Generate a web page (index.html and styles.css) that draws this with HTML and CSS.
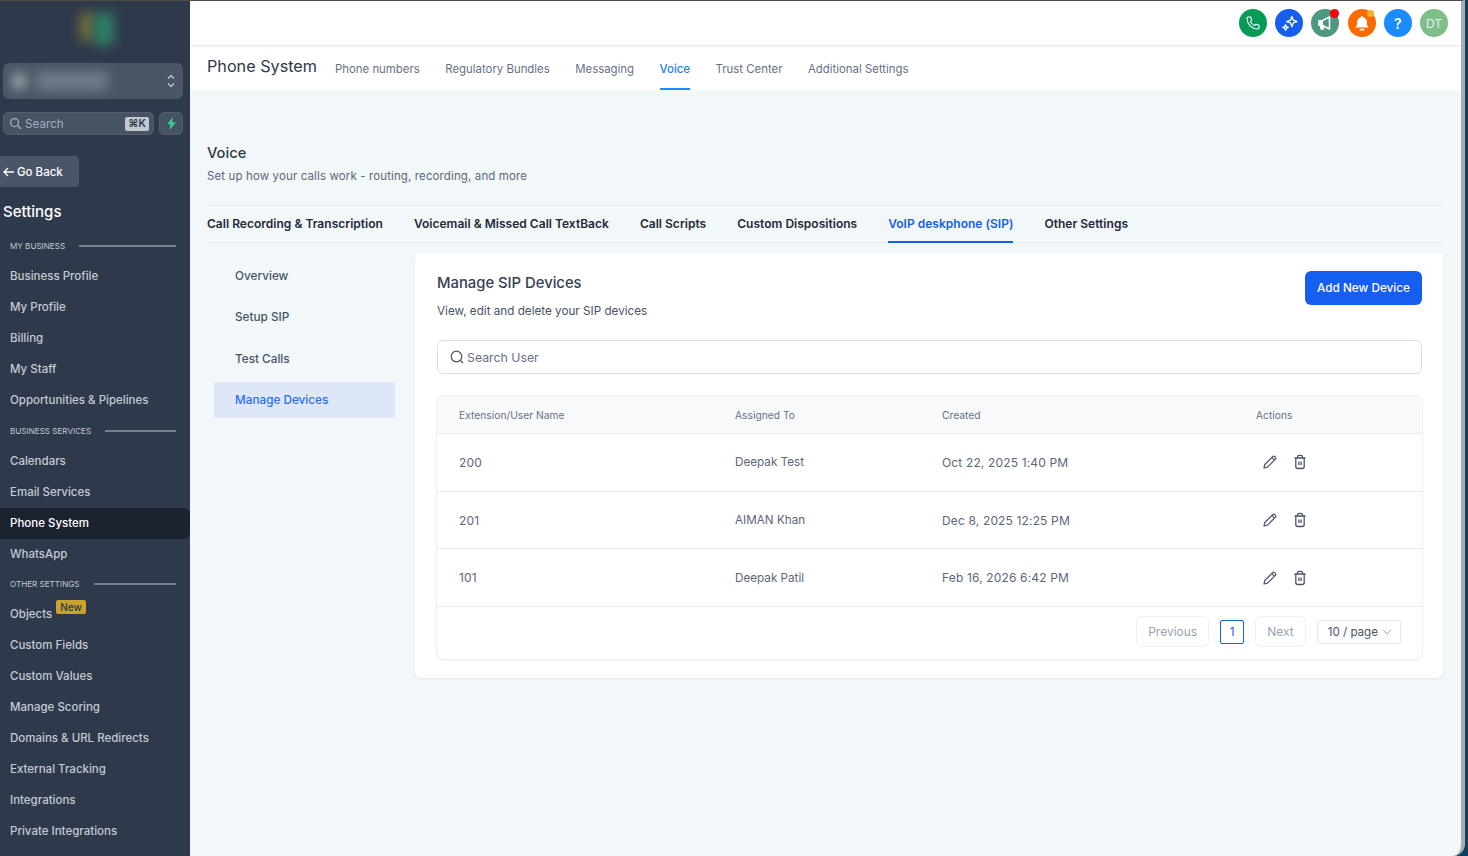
FILE: index.html
```html
<!DOCTYPE html>
<html lang="en">
<head>
<meta charset="utf-8">
<title>Phone System</title>
<link rel="stylesheet" href="styles.css">
</head>
<body>
<div class="app">
  <aside class="sidebar">
    <div class="logo-blur"><span class="lb-a"></span><span class="lb-b"></span></div>
    <div class="account">
      <div class="account-blur"><span class="ab-dot"></span><span class="ab-name"></span></div>
      <svg class="updown" width="10" height="18" viewBox="0 0 10 18" fill="none" stroke="#cbd5e0" stroke-width="1.1"><path d="M2 6.500 5 3.500l3 3M2 11.500l3 3 3-3"/></svg>
    </div>
    <div class="search-row">
      <div class="side-search">
        <svg width="13" height="13" viewBox="0 0 14 14" fill="none" stroke="#a0aec0" stroke-width="1.400"><circle cx="6" cy="6" r="4.300"/><path d="M9.200 9.200 13 13"/></svg>
        <span class="side-search-text">Search</span>
        <span class="kbd">⌘K</span>
      </div>
      <div class="bolt"><svg width="11" height="13" viewBox="0 0 11 13"><path d="M6.800 0 1 7.200h3.300L3.700 13 10 5.600H6.300z" fill="#37ca93"/></svg></div>
    </div>
    <div class="go-back"><svg width="12" height="10" viewBox="0 0 12 10" fill="none" stroke="#fff" stroke-width="1.300"><path d="M11 5H1.500M5 1 1 5l4 4"/></svg><span>Go Back</span></div>
    <div class="side-title">Settings</div>
    <div class="side-group"><span>MY BUSINESS</span><i></i></div>
    <a class="side-item">Business Profile</a>
    <a class="side-item">My Profile</a>
    <a class="side-item">Billing</a>
    <a class="side-item">My Staff</a>
    <a class="side-item">Opportunities &amp; Pipelines</a>
    <div class="side-group"><span>BUSINESS SERVICES</span><i></i></div>
    <a class="side-item">Calendars</a>
    <a class="side-item">Email Services</a>
    <a class="side-item active">Phone System</a>
    <a class="side-item">WhatsApp</a>
    <div class="side-group"><span>OTHER SETTINGS</span><i></i></div>
    <a class="side-item objects">Objects<b class="new">New</b></a>
    <a class="side-item">Custom Fields</a>
    <a class="side-item">Custom Values</a>
    <a class="side-item">Manage Scoring</a>
    <a class="side-item">Domains &amp; URL Redirects</a>
    <a class="side-item">External Tracking</a>
    <a class="side-item">Integrations</a>
    <a class="side-item">Private Integrations</a>
  </aside>
  <main class="main">
    <header class="topbar">
      <span class="circle c-green"><svg width="16" height="16" viewBox="0 0 24 24" fill="none" stroke="#fff" stroke-width="1.600" stroke-linecap="round" stroke-linejoin="round"><path d="M5 3h3.500l1.800 4.700-2.200 1.800a12 12 0 0 0 6.400 6.400l1.800-2.200L21 15.500V19a2 2 0 0 1-2.200 2A16.500 16.500 0 0 1 3 5.200 2 2 0 0 1 5 3z"/></svg></span>
      <span class="circle c-blue"><svg width="19" height="19" viewBox="0 0 24 24" fill="none" stroke="#fff" stroke-width="1.700" stroke-linejoin="round"><path d="M15 3l1.700 4.800 4.800 1.700-4.800 1.700L15 16l-1.700-4.800-4.800-1.700 4.800-1.700zM7 13.500l1 2.500 2.500 1-2.500 1-1 2.500-1-2.500-2.500-1 2.500-1z"/></svg></span>
      <span class="circle c-teal"><svg width="18" height="18" viewBox="0 0 24 24" fill="none" stroke="#fff" stroke-width="2" stroke-linejoin="round"><path d="M4 9h4v6H4z" fill="#fff"/><path d="M8 9l10-5v16L8 15z"/><path d="M6 15l1 5h3l-1-5" fill="#fff"/></svg><i class="dot dot-red"></i></span>
      <span class="circle c-orange"><svg width="18" height="18" viewBox="0 0 24 24" fill="#fff"><path d="M12 2.500a2 2 0 0 1 2 2A6.500 6.500 0 0 1 18.500 11c0 4 1 5.500 2.500 7H3c1.500-1.500 2.500-3 2.500-7A6.500 6.500 0 0 1 10 4.500a2 2 0 0 1 2-2z"/><rect x="8.500" y="19.500" width="7" height="2.500" rx="1.200"/></svg><i class="dot dot-amber"></i></span>
      <span class="circle c-sky">?</span>
      <span class="circle c-avatar">DT</span>
    </header>
    <nav class="subnav">
      <h1 class="subnav-title">Phone System</h1>
      <a class="subnav-link">Phone numbers</a>
      <a class="subnav-link">Regulatory Bundles</a>
      <a class="subnav-link">Messaging</a>
      <a class="subnav-link current">Voice</a>
      <a class="subnav-link">Trust Center</a>
      <a class="subnav-link">Additional Settings</a>
    </nav>
    <section class="content">
      <h2 class="voice-title">Voice</h2>
      <p class="voice-sub">Set up how your calls work - routing, recording, and more</p>
      <div class="tabs">
        <a class="tab">Call Recording &amp; Transcription</a>
        <a class="tab">Voicemail &amp; Missed Call TextBack</a>
        <a class="tab">Call Scripts</a>
        <a class="tab">Custom Dispositions</a>
        <a class="tab current">VoIP deskphone (SIP)</a>
        <a class="tab">Other Settings</a>
      </div>
      <div class="panel-row">
        <div class="leftmenu">
          <a class="lm-item">Overview</a>
          <a class="lm-item">Setup SIP</a>
          <a class="lm-item">Test Calls</a>
          <a class="lm-item selected">Manage Devices</a>
        </div>
        <div class="card">
          <div class="card-head">
            <div>
              <h3 class="card-title">Manage SIP Devices</h3>
              <p class="card-sub">View, edit and delete your SIP devices</p>
            </div>
            <button class="primary">Add New Device</button>
          </div>
          <div class="user-search">
            <svg width="14" height="14" viewBox="0 0 14 14" fill="none" stroke="#4a5568" stroke-width="1.200"><circle cx="6.500" cy="6.500" r="5.300"/><path d="M10.500 10.500 13 13"/></svg>
            <span>Search User</span>
          </div>
          <div class="table">
            <div class="t-row t-head">
              <span class="c1">Extension/User Name</span><span class="c2">Assigned To</span><span class="c3">Created</span><span class="c4">Actions</span>
            </div>
            <div class="t-row">
              <span class="c1">200</span><span class="c2">Deepak Test</span><span class="c3">Oct 22, 2025 1:40 PM</span>
              <span class="c4 actions">
                <svg width="16" height="16" viewBox="0 0 16 16" fill="none" stroke="#4a5568" stroke-width="1.200" stroke-linejoin="round"><path d="M2 14l.8-3.500 8-8a1.300 1.300 0 0 1 1.800 0l.9.900a1.300 1.300 0 0 1 0 1.800l-8 8zM9.800 3.500l2.700 2.700"/></svg>
                <svg width="14" height="16" viewBox="0 0 14 16" fill="none" stroke="#4a5568" stroke-width="1.300" stroke-linejoin="round"><path d="M1.500 4h11M4.500 4V3a1.700 1.700 0 0 1 1.700-1.700h1.600A1.700 1.700 0 0 1 9.500 3v1M2.800 4v8.500a2 2 0 0 0 2 2h4.400a2 2 0 0 0 2-2V4M5.900 7.500v3.500M8.100 7.500v3.500"/></svg>
              </span>
            </div>
            <div class="t-row">
              <span class="c1">201</span><span class="c2">AIMAN Khan</span><span class="c3">Dec 8, 2025 12:25 PM</span>
              <span class="c4 actions">
                <svg width="16" height="16" viewBox="0 0 16 16" fill="none" stroke="#4a5568" stroke-width="1.200" stroke-linejoin="round"><path d="M2 14l.8-3.500 8-8a1.300 1.300 0 0 1 1.800 0l.9.900a1.300 1.300 0 0 1 0 1.800l-8 8zM9.800 3.500l2.700 2.700"/></svg>
                <svg width="14" height="16" viewBox="0 0 14 16" fill="none" stroke="#4a5568" stroke-width="1.300" stroke-linejoin="round"><path d="M1.500 4h11M4.500 4V3a1.700 1.700 0 0 1 1.700-1.700h1.600A1.700 1.700 0 0 1 9.500 3v1M2.800 4v8.500a2 2 0 0 0 2 2h4.400a2 2 0 0 0 2-2V4M5.900 7.500v3.500M8.100 7.500v3.500"/></svg>
              </span>
            </div>
            <div class="t-row">
              <span class="c1">101</span><span class="c2">Deepak Patil</span><span class="c3">Feb 16, 2026 6:42 PM</span>
              <span class="c4 actions">
                <svg width="16" height="16" viewBox="0 0 16 16" fill="none" stroke="#4a5568" stroke-width="1.200" stroke-linejoin="round"><path d="M2 14l.8-3.500 8-8a1.300 1.300 0 0 1 1.800 0l.9.900a1.300 1.300 0 0 1 0 1.800l-8 8zM9.800 3.500l2.700 2.700"/></svg>
                <svg width="14" height="16" viewBox="0 0 14 16" fill="none" stroke="#4a5568" stroke-width="1.300" stroke-linejoin="round"><path d="M1.500 4h11M4.500 4V3a1.700 1.700 0 0 1 1.700-1.700h1.600A1.700 1.700 0 0 1 9.500 3v1M2.800 4v8.500a2 2 0 0 0 2 2h4.400a2 2 0 0 0 2-2V4M5.900 7.500v3.500M8.100 7.500v3.500"/></svg>
              </span>
            </div>
            <div class="pager">
              <span class="pg-btn">Previous</span>
              <span class="pg-num">1</span>
              <span class="pg-btn">Next</span>
              <span class="pg-size">10 / page <svg width="10" height="6" viewBox="0 0 10 6" fill="none" stroke="#a0aec0" stroke-width="1"><path d="M1 1l4 4 4-4"/></svg></span>
            </div>
          </div>
        </div>
      </div>
    </section>
  </main>
</div>
</body>
</html>
```
FILE: styles.css
```css
* { box-sizing: border-box; }
html, body { margin: 0; height: 100%; overflow: hidden; }
body { background: #123f5c; font-family: "Inter", "Liberation Sans", sans-serif; }
.app { display: flex; width: 1465px; height: 856px; border-top: 1px solid #4c4c46; border-right: 4px solid #a9adb1; border-bottom-right-radius: 12px; overflow: hidden; background: #f2f7fa; }
a { display: block; }
h1, h2, h3, p { margin: 0; font-weight: 400; }

.sidebar { width: 190px; flex: none; background: #2e394b; display: flex; flex-direction: column; overflow: hidden; }
.logo-blur { height: 61px; flex: none; display: flex; justify-content: center; padding: 12px 0 0 3px; }
.lb-a { width: 14px; height: 28px; background: #77703a; filter: blur(6px); }
.lb-b { width: 20px; height: 32px; background: #2f8068; filter: blur(6px); }
.account { height: 36px; flex: none; margin: 1px 7px 0 3px; border-radius: 6px; background: #4a5565; display: flex; align-items: center; justify-content: space-between; padding-right: 7px; }
.account-blur { display: flex; align-items: center; gap: 10px; padding-left: 9px; filter: blur(6px); }
.ab-dot { width: 14px; height: 18px; background: #a4abb4; border-radius: 50%; }
.ab-name { width: 72px; height: 18px; background: #737c89; }
.updown { flex: none; }
.search-row { display: flex; flex: none; gap: 5px; margin: 13px 7px 0 3px; }
.side-search { flex: 1; height: 23px; border-radius: 5px; background: #475263; border: 1px solid #525d6e; display: flex; align-items: center; padding: 0 4px 0 5px; gap: 3px; }
.side-search-text { flex: 1; font-size: 11.700px; color: #a0aec0; }
.kbd { background: #c3c9d1; color: #2d3748; font-size: 10.500px; font-weight: 600; border-radius: 2px; padding: 0 3px; line-height: 14px; }
.bolt { width: 24px; height: 23px; border-radius: 5px; background: #475263; border: 1px solid #525d6e; display: flex; align-items: center; justify-content: center; }
.go-back { width: 79px; height: 31px; flex: none; margin-top: 21px; background: #4a5568; border-radius: 0 4px 4px 0; display: flex; align-items: center; gap: 2px; padding-left: 3px; font-size: 11.500px; font-weight: 500; color: #fff; }
.side-title { font-size: 15px; font-weight: 500; color: #fff; padding-left: 3px; margin-top: 15px; line-height: 20px; flex: none; }
.side-group { display: flex; align-items: center; gap: 14px; height: 14px; padding: 0 14px 0 10px; font-size: 8.100px; color: #c3c9d1; flex: none; margin-top: 17px; margin-bottom: 8px; }
.side-group i { flex: 1; height: 2px; background: #76808e; }
.side-item + .side-group { margin-top: 7.500px; margin-bottom: 8px; }
.side-item { height: 31px; line-height: 31px; padding-left: 10px; font-size: 11.500px; font-weight: 500; color: #c5cad2; flex: none; }
.side-item.active { background: #1c2330; color: #fff; border-radius: 0 6px 6px 0; }
.objects { position: relative; }
.new { position: absolute; left: 56px; top: 1px; width: 30px; text-align: center; height: 14px; line-height: 14px; border-radius: 2px; background: #c9a22d; color: #2d3748; font-size: 10px; font-weight: 500; }

.main { flex: 1; min-width: 0; display: flex; flex-direction: column; }
.topbar { height: 44px; flex: none; background: #fff; display: flex; align-items: center; justify-content: flex-end; gap: 8.200px; padding-right: 13px; box-shadow: 0 1px 2px rgba(0,0,0,.12); position: relative; }
.circle { width: 28px; height: 28px; border-radius: 50%; display: flex; align-items: center; justify-content: center; color: #fff; font-size: 12px; position: relative; }
.c-green { background: #069a57; }
.c-blue { background: #155eef; }
.c-teal { background: #4c9880; }
.c-orange { background: #ff6a00; }
.c-sky { background: #1a8cff; font-size: 14px; font-weight: 600; }
.c-avatar { background: #7fbf8a; color: #e8f3ea; font-weight: 400; }
.dot { position: absolute; width: 9px; height: 9px; border-radius: 50%; top: 0; right: 0; }
.dot-red { background: #f5000a; }
.dot-amber { background: #fdb022; width: 7px; height: 7px; top: 1px; right: 2px; }
.subnav { height: 45px; flex: none; background: #fff; display: flex; align-items: center; padding-left: 17px; }
.subnav-title { font-size: 16.200px; color: #2d3748; margin-right: 18px; padding-bottom: 3px; }
.subnav-link { font-size: 11.400px; color: #667085; margin-right: 25.500px; height: 45px; line-height: 48px; }
.subnav-link.current { color: #1a7fe8; font-weight: 500; border-bottom: 2px solid #1a8cff; }

.content { flex: 1; padding: 0 18px 0 17px; }
.voice-title { font-size: 14.700px; color: #2d3748; margin-top: 53px; line-height: 20px; font-weight: 500; }
.voice-sub { font-size: 11.500px; letter-spacing: .12px; color: #5c6779; line-height: 16px; margin-top: 5px; }
.tabs { display: flex; gap: 31px; margin-top: 21px; border-top: 1px solid #e8edf2; border-bottom: 1px solid #e8edf2; height: 38px; }
.tab { font-size: 12px; letter-spacing: .02px; font-weight: 600; color: #1f2937; line-height: 36px; height: 37px; }
.tab.current { color: #155eef; border-bottom: 2px solid #155eef; }
.panel-row { display: flex; margin-top: 10px; }
.leftmenu { width: 208px; flex: none; padding: 5px 20px 0 7px; display: flex; flex-direction: column; gap: 5.330px; }
.lm-item { height: 36px; line-height: 36px; padding-left: 21px; font-size: 11.750px; font-weight: 500; color: #475467; border-radius: 2px; }
.lm-item.selected { background: #dde7f8; color: #2a6ff0; }
.card { flex: 1; height: 425px; background: #fff; border-radius: 6px; box-shadow: 0 1px 2px rgba(16,24,40,.08); padding: 0 21px 0 22px; }
.card-head { display: flex; justify-content: space-between; align-items: flex-start; padding-top: 19px; height: 87px; }
.card-title { font-size: 14.800px; font-weight: 500; color: #344054; line-height: 22px; }
.card-sub { font-size: 11.700px; color: #475467; line-height: 16px; margin-top: 9px; }
.primary { width: 117px; height: 34px; margin-top: -1px; border: 0; border-radius: 6px; background: #155eef; color: #fff; font: 500 11.750px "Inter", sans-serif; }
.user-search { height: 34px; border: 1px solid #d9dfe7; border-radius: 6px; display: flex; align-items: center; gap: 3px; padding-left: 12px; font-size: 12.300px; color: #667085; }
.table { margin-top: 22px; border-radius: 6px; box-shadow: 0 0 0 1px #edf0f4, 0 1px 2px rgba(16,24,40,.1); }
.t-row { display: flex; align-items: center; height: 57.700px; border-bottom: 1px solid #e9edf2; font-size: 11.700px; color: #5c6779; padding-left: 22px; }
.t-head { height: 38px; background: #f7f9fb; font-size: 10.200px; font-weight: 400; letter-spacing: .05px; color: #667085; border-radius: 6px 6px 0 0; }
.c1 { width: 276px; } .c2 { width: 207px; } .c3 { width: 314px; }
.t-row:not(.t-head) .c3 { font-size: 12px; letter-spacing: .15px; }
.t-row:not(.t-head) .c1 { font-size: 12px; letter-spacing: .2px; }
.actions { display: flex; align-items: center; gap: 15px; padding-left: 6px; }
.pager { height: 52px; display: flex; align-items: center; justify-content: flex-end; padding: 0 21px 3px 0; font-size: 11.600px; }
.pg-btn { height: 31px; line-height: 29px; padding: 0 11px; border: 1px solid #eef0f3; border-radius: 6px; color: #98a2b3; margin-right: 11px; font-size: 12px; }
.pg-num { width: 24px; height: 24px; line-height: 22px; text-align: center; border: 1px solid #155eef; border-radius: 2px; color: #155eef; margin-right: 11px; }
.pg-size { height: 24px; line-height: 22px; border: 1px solid #e4e7ec; border-radius: 2px; padding: 0 8px 0 10px; color: #475467; display: flex; align-items: center; gap: 4px; }
```
